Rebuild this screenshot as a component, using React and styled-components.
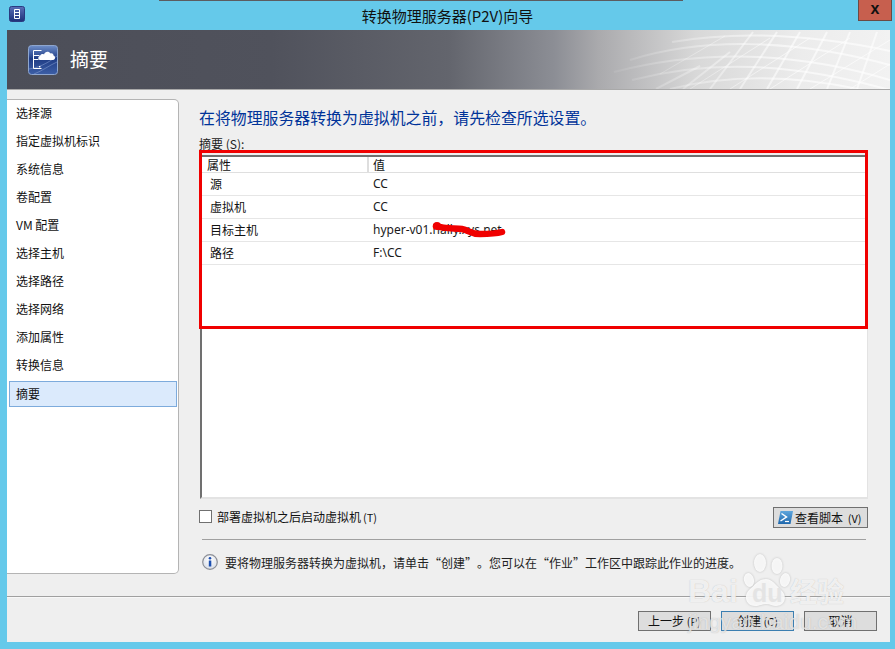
import React from 'react'
import styled, { createGlobalStyle } from 'styled-components'

const GlobalStyle = createGlobalStyle`
  html, body { margin: 0; padding: 0; background: #65c9ea; }
  * { box-sizing: border-box; }
`

const FONT = `"Noto Sans CJK SC", "Liberation Sans", sans-serif`

const steps = ['选择源', '指定虚拟机标识', '系统信息', '卷配置', 'VM 配置', '选择主机', '选择路径', '选择网络', '添加属性', '转换信息', '摘要']

const rows = [
  { name: '源', value: 'CC' },
  { name: '虚拟机', value: 'CC' },
  { name: '目标主机', value: 'hyper-v01.hally.xys.net', scribbled: true },
  { name: '路径', value: 'F:\\CC' },
]

function WindowIcon() {
  return (
    <svg width="16" height="16" viewBox="0 0 16 16">
      <defs>
        <linearGradient id="winIcon" x1="0" y1="0" x2="0" y2="1">
          <stop offset="0" stopColor="#5a70b8" />
          <stop offset="1" stopColor="#1d2f78" />
        </linearGradient>
      </defs>
      <rect x="0.5" y="0.5" width="15" height="15" rx="2" fill="url(#winIcon)" stroke="#2a3a80" />
      <path d="M5.5 3.5h5v9h-5zM5.5 6.5h5M5.5 9.5h5" fill="none" stroke="#fff" />
    </svg>
  )
}

function BannerIcon() {
  return (
    <svg width="30" height="30" viewBox="0 0 30 30">
      <defs>
        <linearGradient id="bannerIcon" x1="0" y1="0" x2="0" y2="1">
          <stop offset="0" stopColor="#6f8fc9" />
          <stop offset="0.45" stopColor="#1f3c85" />
          <stop offset="1" stopColor="#3d5fa6" />
        </linearGradient>
      </defs>
      <rect x="0.5" y="0.5" width="29" height="29" rx="3" fill="url(#bannerIcon)" stroke="#8ea6cf" />
      <path d="M1 24c8-1 18-5 28-13M6 29c8-3 16-9 23-12" fill="none" stroke="#8ea6d8" strokeOpacity="0.5" />
      <path d="M5.5 5.500h8M5.500 5.500v18h8M5.500 10.500h6M5.500 14.500h5" fill="none" stroke="#fff" />
      <rect x="11" y="21" width="1.4" height="1.4" fill="#fff" />
      <path d="M12 15c-2 0-2.500-3.500 0-4 .5-2 3-2.500 4-1.500C17 6 21 6 22.500 8.500c1.500-.5 3 .5 3 2 2 .3 2.200 4.500-.5 4.500z" fill="#fff" />
    </svg>
  )
}

// curved mesh at the right end of the banner, coordinates from the banner's x=600
const meshArcs = [
  'M72 12 C 130 2, 200 2, 290 21',
  'M30 30 C 100 8, 190 8, 290 35',
  'M14 42 C 100 20, 190 20, 290 50',
  'M32 50 C 110 30, 190 32, 290 60',
  'M70 59 C 130 44, 200 44, 280 64',
]
const meshRibs = [
  'M56 59 L100 36',
  'M83 59 L130 22',
  'M110 59 L153 2',
  'M140 59 L177 2',
  'M167 59 L200 2',
  'M197 59 L227 2',
  'M227 59 L250 2',
  'M257 59 L277 2',
]
const meshThin = [
  'M130 59 L210 8',
  'M170 59 L250 8',
  'M210 59 L290 10',
  'M250 59 L290 34',
  'M90 59 L170 8',
  'M60 44 L125 6',
]

function MeshArt() {
  return (
    <Mesh viewBox="0 0 290 59" width="290" height="59">
      <defs>
        <linearGradient id="meshStroke" gradientUnits="userSpaceOnUse" x1="20" y1="0" x2="190" y2="0">
          <stop offset="0" stopColor="#fff" stopOpacity="0.08" />
          <stop offset="1" stopColor="#fff" stopOpacity="0.6" />
        </linearGradient>
      </defs>
      {meshThin.map((d) => <ThinLine key={d} d={d} />)}
      {meshArcs.map((d) => <path key={d} d={d} />)}
      {meshRibs.map((d) => <path key={d} d={d} />)}
    </Mesh>
  )
}

function ScriptIcon() {
  return (
    <svg width="15" height="15" viewBox="0 0 15 15">
      <defs>
        <linearGradient id="psIcon" x1="0" y1="0" x2="0" y2="1">
          <stop offset="0" stopColor="#5fa6dc" />
          <stop offset="1" stopColor="#1f68ad" />
        </linearGradient>
      </defs>
      <path d="M2.500 1H15l-2.500 13H0z" fill="url(#psIcon)" />
      <path d="M3.500 3.500l5 3.500-6 4" fill="none" stroke="#fff" strokeWidth="1.500" />
      <path d="M7 11.500h4" stroke="#fff" strokeWidth="1.200" />
    </svg>
  )
}

function InfoIcon() {
  return (
    <svg width="16" height="16" viewBox="0 0 16 16">
      <defs>
        <radialGradient id="infoIcon" cx="0.5" cy="0.35" r="0.7">
          <stop offset="0" stopColor="#ffffff" />
          <stop offset="1" stopColor="#d5dbe6" />
        </radialGradient>
      </defs>
      <circle cx="8" cy="8" r="7.300" fill="url(#infoIcon)" stroke="#8c8f96" strokeWidth="1.200" />
      <circle cx="8" cy="4.300" r="1.300" fill="#1c4fb0" />
      <rect x="6.800" y="6.500" width="2.500" height="6" fill="#1c4fb0" />
    </svg>
  )
}

function Paw() {
  return (
    <svg width="52" height="56" viewBox="0 0 52 56">
      <ellipse cx="9" cy="27" rx="5" ry="7" transform="rotate(-15 9 27)" />
      <ellipse cx="20" cy="10" rx="6" ry="9" />
      <ellipse cx="37" cy="13" rx="5.500" ry="8" />
      <ellipse cx="45" cy="27" rx="5" ry="7" transform="rotate(15 45 27)" />
      <path d="M26 26c6 0 9 5 15 11 7 6 4 16-5 16-4 0-6-2-10-2s-6 2-11 2c-9 0-12-10-6-16 6-5 9-11 17-11z" />
    </svg>
  )
}

function App() {
  return (
    <Win>
      <GlobalStyle />
      <TopSliver />
      <TitleBar>
        <TitleIcon><WindowIcon /></TitleIcon>
        <TitleText>转换物理服务器(P2V)向导</TitleText>
        <CloseButton>x</CloseButton>
      </TitleBar>
      <Client>
        <Banner>
          <MeshArt />
          <BannerIcon />
          <BannerTitle>摘要</BannerTitle>
        </Banner>
        <Body>
          <Sidebar>
            {steps.map((s, i) => (
              <Step key={s} $active={i === steps.length - 1}>{s}</Step>
            ))}
          </Sidebar>
          <Main>
            <Heading>在将物理服务器转换为虚拟机之前，请先检查所选设置。</Heading>
            <GridLabel>摘要 (S):</GridLabel>
            <Grid>
              <HeaderRow>
                <HeadCell>属性</HeadCell>
                <HeadCell $value>值</HeadCell>
              </HeaderRow>
              {rows.map((r) => (
                <Row key={r.name}>
                  <NameCell>{r.name}</NameCell>
                  <ValueCell>
                    {r.value}
                    {r.scribbled && (
                      <Scribble viewBox="0 0 84 18" width="84" height="18">
                        <circle cx="11" cy="5" r="4" />
                        <path d="M10 5C19 8 29 7 36 8S44 13 54 13 69 13 76 11" />
                      </Scribble>
                    )}
                  </ValueCell>
                </Row>
              ))}
              <Highlight />
            </Grid>
            <OptionRow>
              <CheckLabel>
                <CheckBox />
                部署虚拟机之后启动虚拟机<Mnemonic $tight>(T)</Mnemonic>
              </CheckLabel>
              <ScriptButton><ScriptIcon />查看脚本 <Mnemonic>(V)</Mnemonic></ScriptButton>
            </OptionRow>
            <Divider />
            <InfoRow>
              <InfoIcon />
              要将物理服务器转换为虚拟机，请单击“创建”。您可以在“作业”工作区中跟踪此作业的进度。
            </InfoRow>
          </Main>
        </Body>
        <Footer>
          <Button>上一步 <Mnemonic>(P)</Mnemonic></Button>
          <Button $primary>创建 <Mnemonic>(C)</Mnemonic></Button>
          <Button>取消</Button>
        </Footer>
      </Client>
      <Watermark>
        <PawWrap><Paw /></PawWrap>
        <BaiText>Bai</BaiText>
        <DuText>du</DuText>
        <JingText>经验</JingText>
        <SiteText>jingyan.baidu.com</SiteText>
      </Watermark>
    </Win>
  )
}

const Win = styled.div`
  position: relative;
  width: 895px;
  height: 649px;
  overflow: hidden;
  display: flex;
  flex-direction: column;
  background: #65c9ea;
  font-family: ${FONT};
  font-size: 12px;
  color: #111;
  text-spacing-trim: space-all;
`

const TopSliver = styled.div`
  position: absolute;
  left: 159px;
  top: 0;
  width: 524px;
  height: 1px;
  background: #5c5c60;
`

const TitleBar = styled.div`
  height: 30px;
  flex: none;
  display: flex;
  align-items: center;
  justify-content: center;
  position: relative;
`

const TitleIcon = styled.div`
  position: absolute;
  left: 9px;
  top: 6px;
  line-height: 0;
`

const TitleText = styled.div`
  font-size: 15px;
  line-height: 20px;
  margin-top: 1px;
  color: #111;
`

const CloseButton = styled.div`
  position: absolute;
  right: 3px;
  top: 0;
  width: 34px;
  height: 21px;
  background: #c75f4e;
  border: 1px solid #6b4a44;
  border-top: none;
  color: #111;
  font: bold 16px/17px "Liberation Sans", sans-serif;
  text-align: center;
`

const Client = styled.div`
  flex: 1;
  margin: 0 5px 7px 7px;
  display: flex;
  flex-direction: column;
  background: #efefef;
  min-height: 0;
`

const Banner = styled.div`
  position: relative;
  overflow: hidden;
  height: 60px;
  flex: none;
  display: flex;
  align-items: center;
  padding: 0 0 0 21px;
  gap: 12px;
  border-bottom: 1px solid #a9a9a9;
  background: linear-gradient(90deg, #4c4e58 0%, #50525c 30%, #63656d 50%, #8c8e95 62%, #aaaaad 67%, #d8d8d8 78%, #ececec 90%, #f2f2f2 100%);
  svg { position: relative; flex: none; }
`

const Mesh = styled.svg`
  position: absolute !important;
  right: 0;
  top: 0;
  path {
    fill: none;
    stroke: url(#meshStroke);
    stroke-width: 2;
  }
`

const ThinLine = styled.path`
  && {
    stroke-width: 1;
  }
`

const BannerTitle = styled.div`
  position: relative;
  color: #fff;
  font-size: 19px;
  line-height: 24px;
  margin-top: -2px;
`

const Body = styled.div`
  flex: 1;
  display: flex;
  min-height: 0;
`

const Sidebar = styled.div`
  width: 172px;
  height: 475px;
  margin-top: 9px;
  flex: none;
  background: #fff;
  border: 1px solid #b4b4b4;
  border-left: none;
  border-radius: 0 5px 5px 0;
  padding: 0 1px 0 2px;
  display: flex;
  flex-direction: column;
`

const Step = styled.div`
  height: ${(p) => (p.$active ? '26px' : '28px')};
  margin-top: ${(p) => (p.$active ? '1px' : '0')};
  padding-left: 6px;
  line-height: ${(p) => (p.$active ? '23px' : '24px')};
  background: ${(p) => (p.$active ? '#dbeafc' : 'transparent')};
  border: 1px solid ${(p) => (p.$active ? '#7dabdc' : 'transparent')};
`

const Main = styled.div`
  flex: 1;
  min-width: 0;
  padding: 18px 22px 0 20px;
  display: flex;
  flex-direction: column;
`

const Heading = styled.div`
  font-size: 15.900px;
  line-height: 20px;
  color: #003399;
  margin-bottom: 9px;
`

const GridLabel = styled.div`
  font-size: 12px;
  line-height: 13px;
  margin-bottom: 5px;
  color: #222;
`

const Grid = styled.div`
  position: relative;
  margin-left: 1px;
  height: 344px;
  flex: none;
  background: #fff;
  border: 2px solid #e3e3e3;
  border-top-color: #707070;
  border-left-color: #707070;
  border-right-width: 1px;
`

const HeaderRow = styled.div`
  display: grid;
  grid-template-columns: 165px 1fr;
  height: 16px;
  border-bottom: 1px solid #dfdfdf;
`

const HeadCell = styled.div`
  line-height: 15px;
  padding-left: ${(p) => (p.$value ? '4px' : '5px')};
  border-left: ${(p) => (p.$value ? '2px solid #dedede' : 'none')};
`

const Row = styled.div`
  display: grid;
  grid-template-columns: 165px 1fr;
  height: 23px;
  border-bottom: 1px solid #e6e6e6;
  line-height: 22px;
`

const NameCell = styled.div`
  padding-left: 8px;
`

const ValueCell = styled.div`
  position: relative;
  padding-left: 6px;
  font-family: "Noto Sans", sans-serif;
  font-size: 12px;
  color: #1a1a1a;
`

const Scribble = styled.svg`
  position: absolute;
  left: 59px;
  top: 2px;
  circle { fill: #f00000; }
  path {
    fill: none;
    stroke: #f00000;
    stroke-width: 6.500;
    stroke-linecap: round;
  }
`

const Highlight = styled.div`
  position: absolute;
  left: -3px;
  top: -7px;
  width: 669px;
  height: 179px;
  border: 3px solid #f00000;
  pointer-events: none;
`

const OptionRow = styled.div`
  display: flex;
  justify-content: space-between;
  align-items: flex-start;
  margin-top: 8px;
  height: 24px;
`

const CheckLabel = styled.div`
  display: flex;
  align-items: center;
  gap: 5px;
  height: 19px;
  white-space: pre;
`

const CheckBox = styled.div`
  width: 13px;
  height: 13px;
  background: #fff;
  border: 1px solid #707070;
`

const Mnemonic = styled.span`
  font-size: 11px;
  margin-left: ${(p) => (p.$tight ? '-3px' : '0')};
`

const ScriptButton = styled.div`
  width: 95px;
  height: 21px;
  display: flex;
  align-items: center;
  gap: 2px;
  white-space: pre;
  background: #dddddd;
  border: 1px solid #707070;
  padding-left: 4px;
`

const Divider = styled.div`
  height: 1px;
  margin: 8px 2px 0 3px;
  background: #a0a0a0;
`

const InfoRow = styled.div`
  display: flex;
  align-items: center;
  gap: 7px;
  margin: 14px 0 0 3px;
  height: 16px;
  color: #222;
  white-space: nowrap;
`

const Footer = styled.div`
  height: 46px;
  flex: none;
  border-top: 1px solid #a0a0a0;
  box-shadow: inset 0 1px 0 #f8f8f8;
  display: flex;
  justify-content: flex-end;
  gap: 10px;
  padding: 14px 13px 0 0;
`

const Button = styled.div`
  width: 73px;
  height: 20px;
  background: #dddddd;
  border: 1px solid ${(p) => (p.$primary ? '#3c7fb1' : '#707070')};
  text-align: center;
  line-height: 18px;
  white-space: pre;
`

const Watermark = styled.div`
  position: absolute;
  left: 680px;
  top: 550px;
  width: 190px;
  height: 95px;
  color: rgba(255, 255, 255, 0.8);
  pointer-events: none;
  font-family: "Liberation Sans", sans-serif;
  text-shadow: 0 0 1px rgba(160, 160, 160, 0.7);
`

const PawWrap = styled.div`
  position: absolute;
  left: 60px;
  top: 3px;
  line-height: 0;
  svg {
    fill: rgba(255, 255, 255, 0.85);
    filter: drop-shadow(0 0 1px rgba(160, 160, 160, 0.7));
  }
`

const BaiText = styled.div`
  position: absolute;
  left: 8px;
  top: 25px;
  font-size: 32px;
  font-weight: bold;
  line-height: 32px;
`

const DuText = styled.div`
  position: absolute;
  left: 72px;
  top: 31px;
  font-size: 25px;
  font-weight: bold;
  line-height: 25px;
  color: #e4e4e4;
  text-shadow: none;
`

const JingText = styled.div`
  position: absolute;
  left: 110px;
  top: 25px;
  font-family: ${FONT};
  font-size: 27px;
  font-weight: bold;
  line-height: 32px;
`

const SiteText = styled.div`
  position: absolute;
  left: 8px;
  top: 59px;
  font-size: 21px;
  line-height: 26px;
  white-space: nowrap;
  color: rgba(255, 255, 255, 0.6);
`

export default App
